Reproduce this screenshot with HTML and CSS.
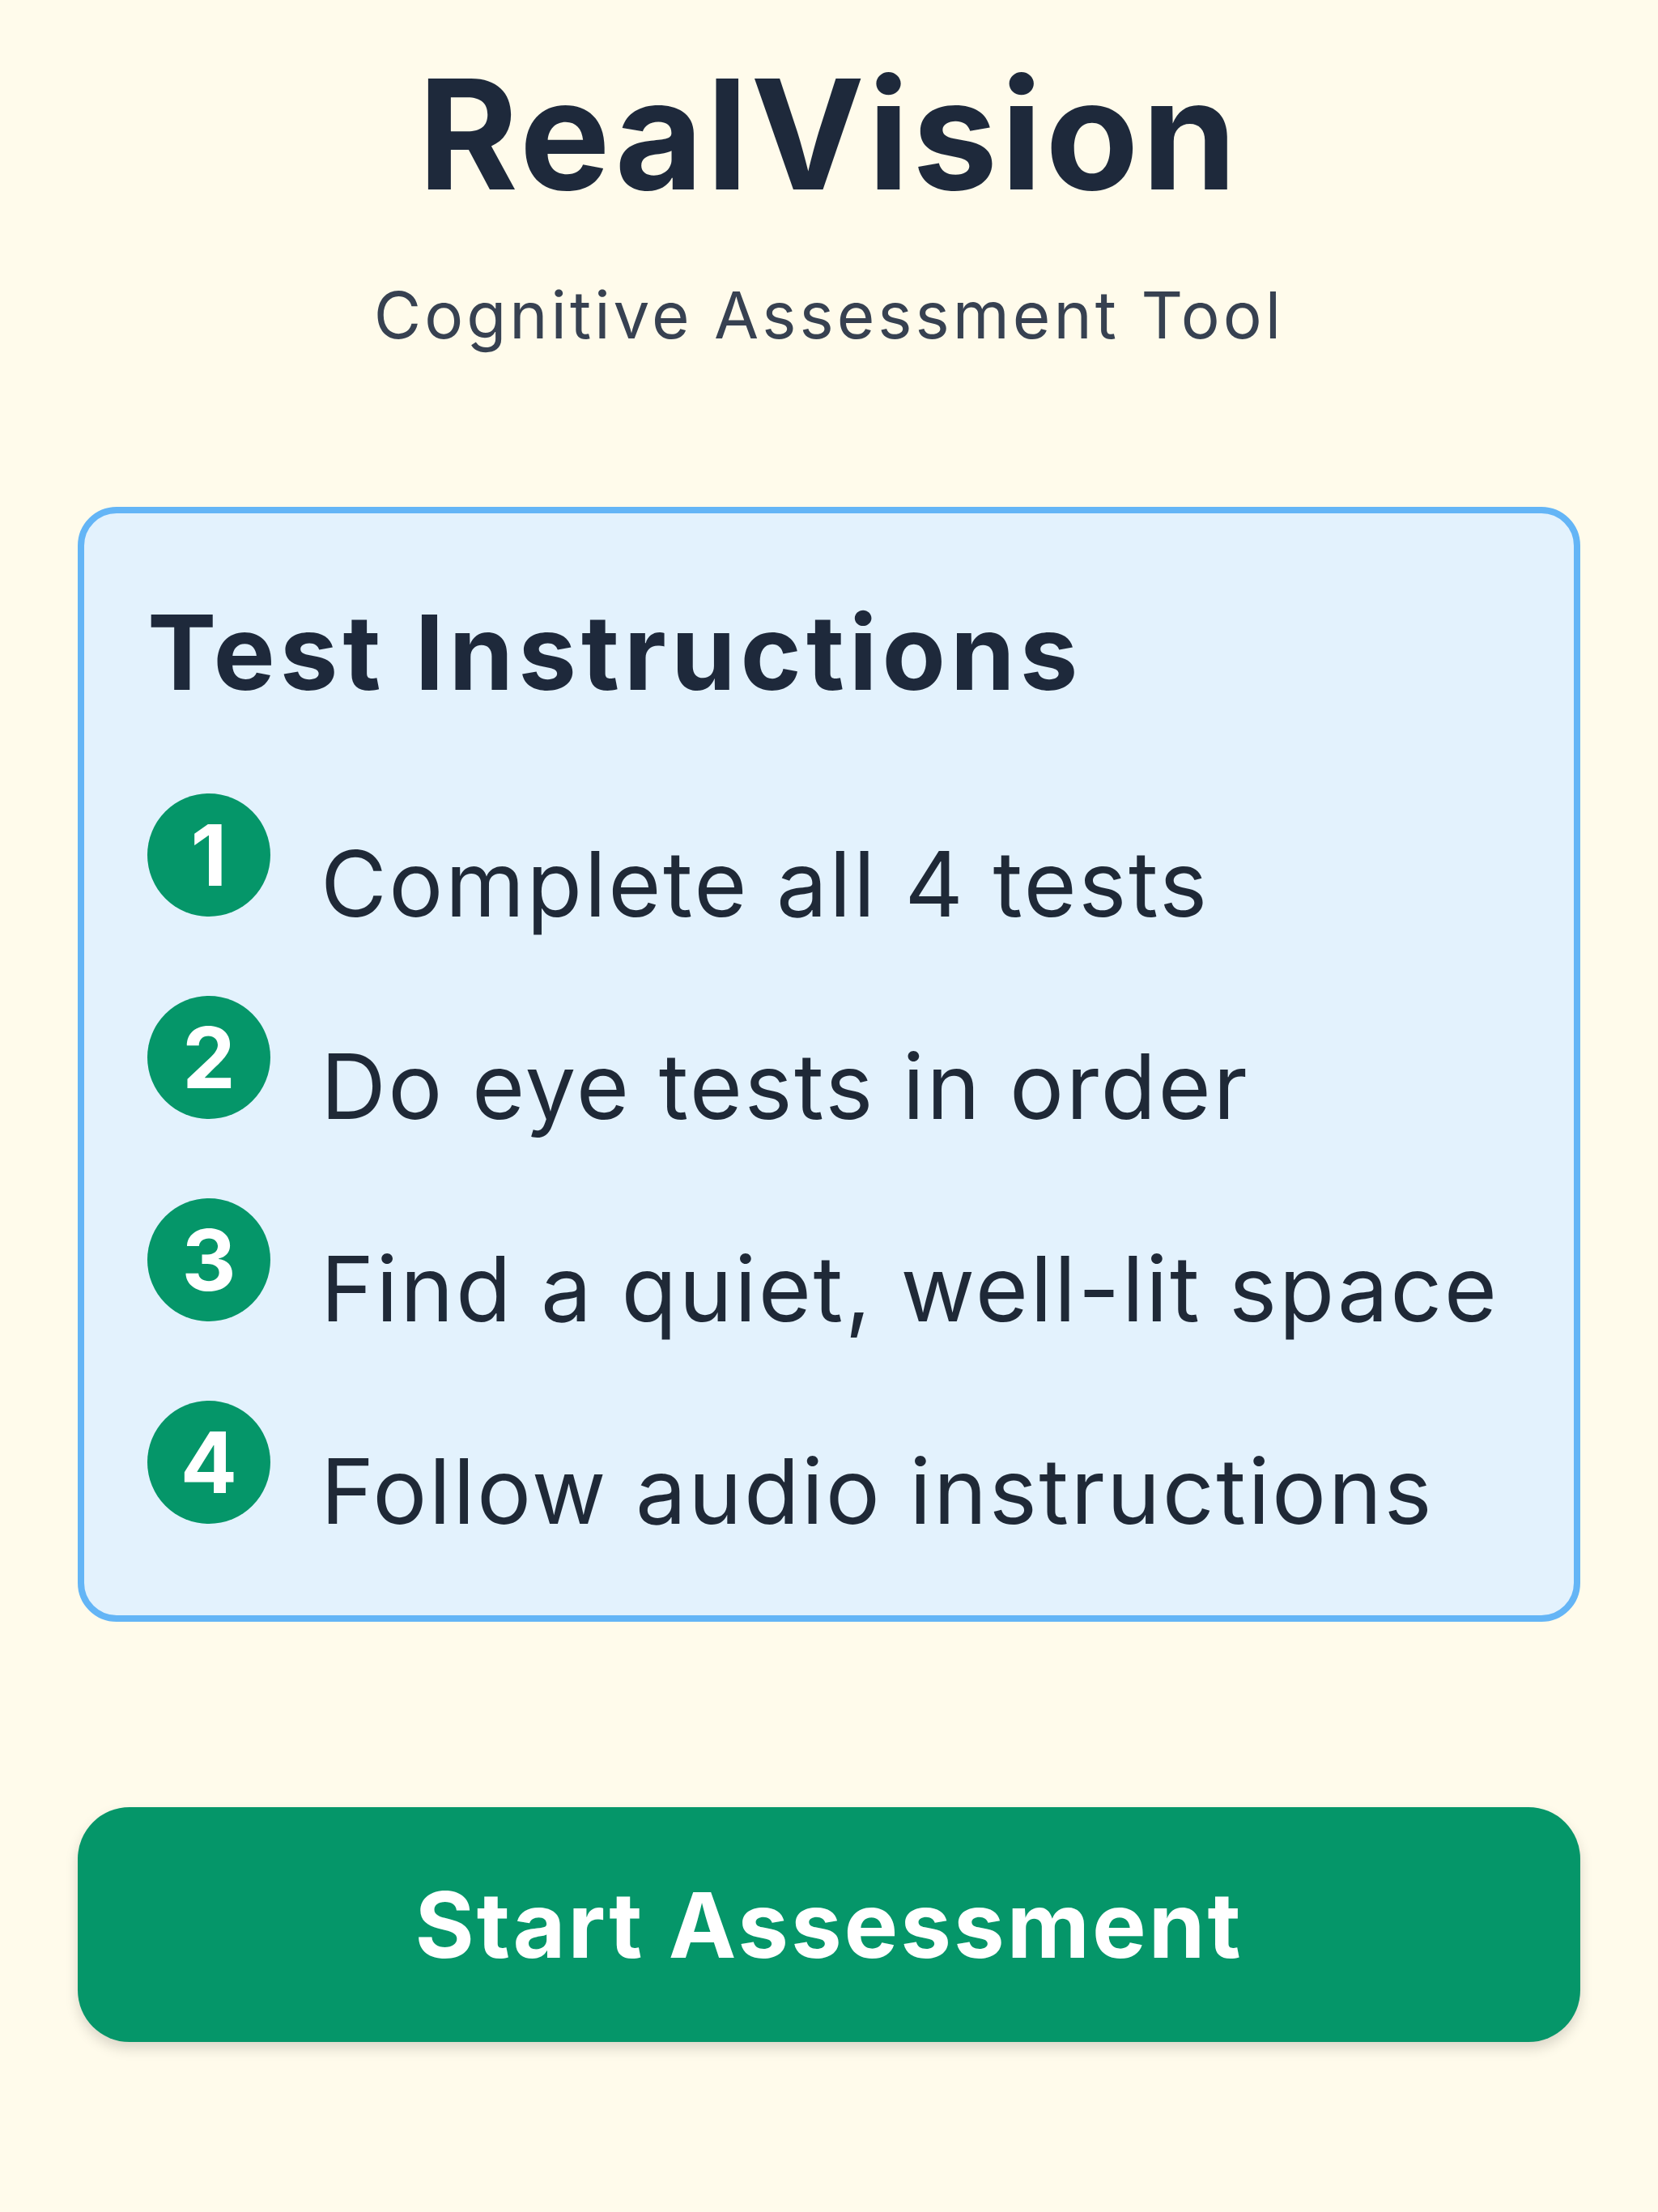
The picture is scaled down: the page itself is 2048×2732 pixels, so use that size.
FILE: index.html
```html
<!DOCTYPE html>
<html lang="en">

<head>
    <meta charset="UTF-8">
    <meta name="viewport" content="width=device-width, initial-scale=1.0">
    <title>RealVision</title>

    <link rel="stylesheet" href="styles.css">
</head>

<body>
    <main class="screen">
        <header class="brand">
            <h1 class="brand-title">RealVision</h1>
            <p class="brand-subtitle">Cognitive Assessment Tool</p>
        </header>

        <section class="instructions">
            <h2 class="instructions-title">Test Instructions</h2>
            <ol class="steps">
                <li class="step">
                    <span class="step-num">1</span>
                    <span class="step-text">Complete all 4 tests</span>
                </li>
                <li class="step">
                    <span class="step-num">2</span>
                    <span class="step-text">Do eye tests in order</span>
                </li>
                <li class="step">
                    <span class="step-num">3</span>
                    <span class="step-text">Find a quiet, well-lit space</span>
                </li>
                <li class="step">
                    <span class="step-num">4</span>
                    <span class="step-text">Follow audio instructions</span>
                </li>
            </ol>
        </section>

        <button class="start-button">Start Assessment</button>
    </main>
</body>

</html>
```

FILE: styles.css
```css
html,
body {
    margin: 0;
    background-color: #fffbeb;
}

body {
    min-height: 2732px;
    font-family: Inter, "Noto Sans", sans-serif;
    color: #1f2937;
}

.screen {
    display: flex;
    flex-direction: column;
    padding: 0 96px;
}

/* 標題 */
.brand {
    display: flex;
    flex-direction: column;
    align-items: center;
    text-align: center;
}

.brand-title {
    margin: 72px 0 0;
    font-size: 188px;
    line-height: 1;
    font-weight: 700;
    letter-spacing: 4px;
    color: #1e293b;
}

.brand-subtitle {
    margin: 89px 0 0;
    font-size: 80px;
    line-height: 1;
    letter-spacing: 4px;
    color: #374151;
}

/* 說明卡片 */
.instructions {
    margin-top: 197px;
    padding: 108px 78px 98px;
    border: 8px solid #64b5f6;
    border-radius: 48px;
    background-color: #e3f2fd;
}

.instructions-title {
    margin: 0;
    font-size: 128px;
    line-height: 1;
    font-weight: 700;
    letter-spacing: 6px;
    color: #1e293b;
}

.steps {
    list-style: none;
    margin: 110px 0 0;
    padding: 0;
    display: flex;
    flex-direction: column;
    gap: 83px;
}

.step {
    display: flex;
    align-items: flex-start;
    gap: 62px;
}

.step-num {
    flex: none;
    width: 152px;
    height: 152px;
    border-radius: 50%;
    background-color: #059669;
    color: #ffffff;

    display: flex;
    align-items: center;
    justify-content: center;

    font-size: 104px;
    font-weight: 700;
    line-height: 1;
}

.step-text {
    padding-top: 55px;
    font-size: 112px;
    line-height: 1;
    letter-spacing: 2.5px;
    color: #1f2937;
}

/* 開始按鈕 */
.start-button {
    margin-top: 229px;
    height: 290px;
    border: none;
    border-radius: 64px;
    background-color: #059669;
    box-shadow: rgba(0, 0, 0, 0.15) 0 8px 16px;

    font-family: inherit;
    font-size: 112px;
    font-weight: 700;
    letter-spacing: 3px;
    color: #ffffff;
}
```
